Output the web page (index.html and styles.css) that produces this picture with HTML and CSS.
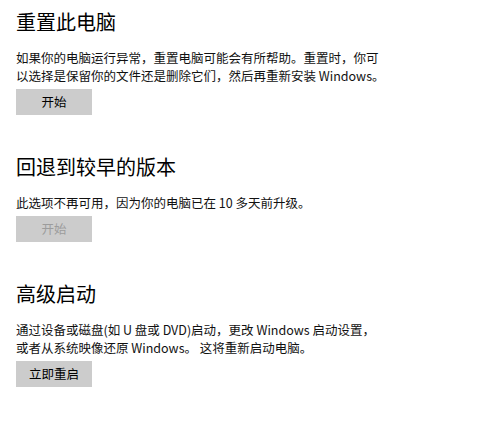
FILE: index.html
```html
<!DOCTYPE html>
<html lang="zh-CN">
<head>
<meta charset="utf-8">
<title>恢复</title>
<link rel="stylesheet" href="styles.css">
</head>
<body>
<main class="page">
  <section class="section">
    <h2 class="title">重置此电脑</h2>
    <p class="desc">如果你的电脑运行异常，重置电脑可能会有所帮助。重置时，你可<br>以选择是保留你的文件还是删除它们，然后再重新安装 Windows。</p>
    <button class="btn" type="button">开始</button>
  </section>
  <section class="section">
    <h2 class="title">回退到较早的版本</h2>
    <p class="desc">此选项不再可用，因为你的电脑已在 10 多天前升级。</p>
    <button class="btn btn-disabled" type="button" disabled>开始</button>
  </section>
  <section class="section">
    <h2 class="title">高级启动</h2>
    <p class="desc">通过设备或磁盘(如 U 盘或 DVD)启动，更改 Windows 启动设置，<br>或者从系统映像还原 Windows。 这将重新启动电脑。</p>
    <button class="btn" type="button">立即重启</button>
  </section>
</main>
</body>
</html>
```

FILE: styles.css
```css
html, body {
  margin: 0;
  padding: 0;
  background: #ffffff;
}

body {
  font-family: "Noto Sans CJK SC", "Noto Sans", sans-serif;
  color: #000000;
}

.page {
  padding: 8px 16px 0 16px;
  display: flex;
  flex-direction: column;
  gap: 38px;
}

.section {
  display: flex;
  flex-direction: column;
  align-items: flex-start;
}

.title {
  margin: 0;
  font-size: 20px;
  line-height: 28px;
  font-weight: 400;
  color: #000000;
}

.desc {
  margin: 13px 0 0 0;
  font-size: 12.5px;
  line-height: 18px;
  color: #111111;
  white-space: nowrap;
}

.btn {
  margin-top: 4px;
  width: 76px;
  height: 26px;
  padding: 0;
  border: none;
  background: #cccccc;
  font-family: "Noto Sans CJK SC", "Noto Sans", sans-serif;
  font-size: 12.5px;
  line-height: 26px;
  color: #000000;
  text-align: center;
}

.btn-disabled {
  color: #9c9c9c;
}
```
